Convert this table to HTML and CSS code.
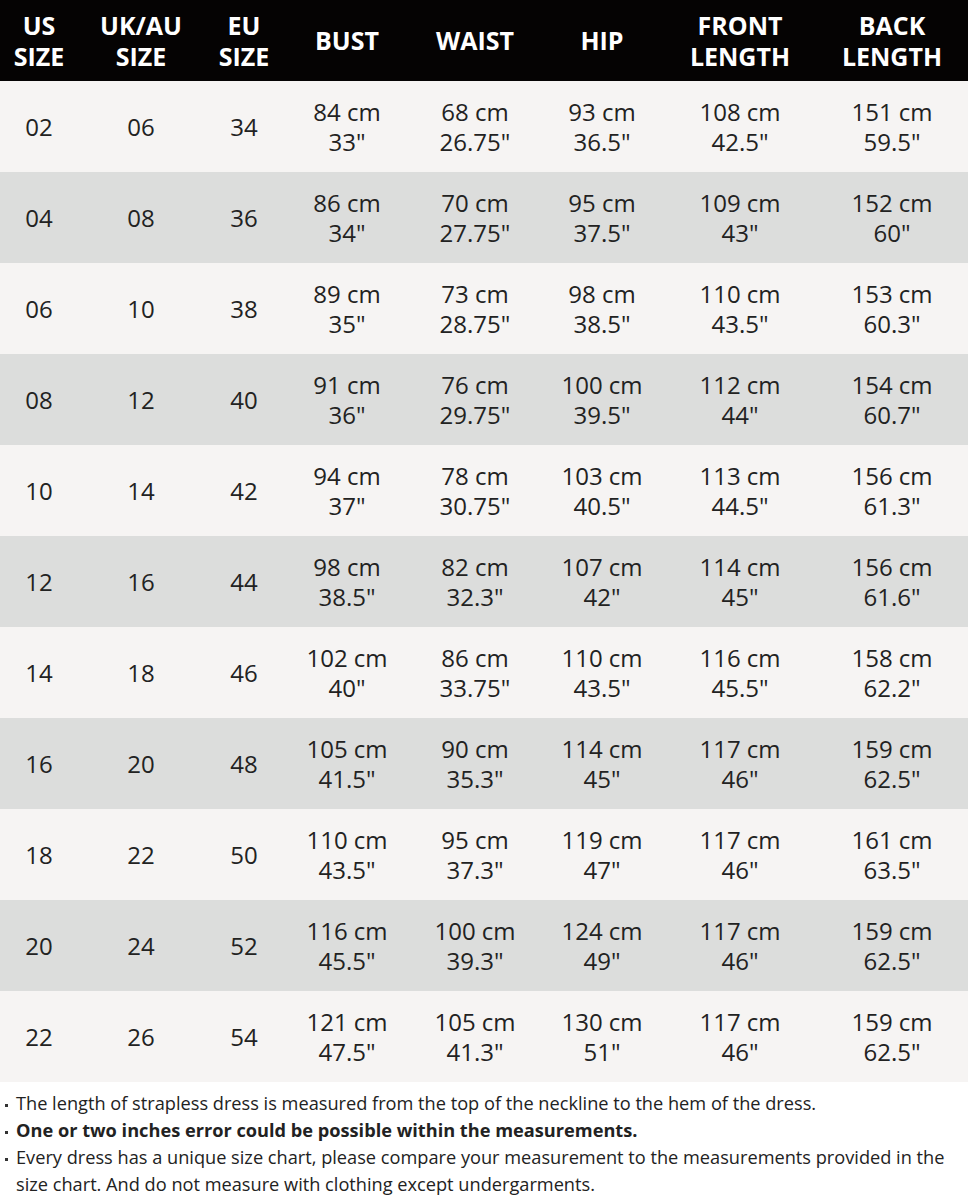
FILE: index.html
```html
<!DOCTYPE html>
<html>
<head>
<meta charset="utf-8">
<link rel="stylesheet" href="styles.css">
</head>
<body>
<div class="chart">
  <div class="row head">
    <div class="cell">US<br>SIZE</div>
    <div class="cell">UK/AU<br>SIZE</div>
    <div class="cell">EU<br>SIZE</div>
    <div class="cell">BUST</div>
    <div class="cell">WAIST</div>
    <div class="cell">HIP</div>
    <div class="cell">FRONT<br>LENGTH</div>
    <div class="cell">BACK<br>LENGTH</div>
  </div>
  <div class="row light">
    <div class="cell">02</div><div class="cell">06</div><div class="cell">34</div>
    <div class="cell">84 cm<br>33"</div><div class="cell">68 cm<br>26.75"</div><div class="cell">93 cm<br>36.5"</div>
    <div class="cell">108 cm<br>42.5"</div><div class="cell">151 cm<br>59.5"</div>
  </div>
  <div class="row gray">
    <div class="cell">04</div><div class="cell">08</div><div class="cell">36</div>
    <div class="cell">86 cm<br>34"</div><div class="cell">70 cm<br>27.75"</div><div class="cell">95 cm<br>37.5"</div>
    <div class="cell">109 cm<br>43"</div><div class="cell">152 cm<br>60"</div>
  </div>
  <div class="row light">
    <div class="cell">06</div><div class="cell">10</div><div class="cell">38</div>
    <div class="cell">89 cm<br>35"</div><div class="cell">73 cm<br>28.75"</div><div class="cell">98 cm<br>38.5"</div>
    <div class="cell">110 cm<br>43.5"</div><div class="cell">153 cm<br>60.3"</div>
  </div>
  <div class="row gray">
    <div class="cell">08</div><div class="cell">12</div><div class="cell">40</div>
    <div class="cell">91 cm<br>36"</div><div class="cell">76 cm<br>29.75"</div><div class="cell">100 cm<br>39.5"</div>
    <div class="cell">112 cm<br>44"</div><div class="cell">154 cm<br>60.7"</div>
  </div>
  <div class="row light">
    <div class="cell">10</div><div class="cell">14</div><div class="cell">42</div>
    <div class="cell">94 cm<br>37"</div><div class="cell">78 cm<br>30.75"</div><div class="cell">103 cm<br>40.5"</div>
    <div class="cell">113 cm<br>44.5"</div><div class="cell">156 cm<br>61.3"</div>
  </div>
  <div class="row gray">
    <div class="cell">12</div><div class="cell">16</div><div class="cell">44</div>
    <div class="cell">98 cm<br>38.5"</div><div class="cell">82 cm<br>32.3"</div><div class="cell">107 cm<br>42"</div>
    <div class="cell">114 cm<br>45"</div><div class="cell">156 cm<br>61.6"</div>
  </div>
  <div class="row light">
    <div class="cell">14</div><div class="cell">18</div><div class="cell">46</div>
    <div class="cell">102 cm<br>40"</div><div class="cell">86 cm<br>33.75"</div><div class="cell">110 cm<br>43.5"</div>
    <div class="cell">116 cm<br>45.5"</div><div class="cell">158 cm<br>62.2"</div>
  </div>
  <div class="row gray">
    <div class="cell">16</div><div class="cell">20</div><div class="cell">48</div>
    <div class="cell">105 cm<br>41.5"</div><div class="cell">90 cm<br>35.3"</div><div class="cell">114 cm<br>45"</div>
    <div class="cell">117 cm<br>46"</div><div class="cell">159 cm<br>62.5"</div>
  </div>
  <div class="row light">
    <div class="cell">18</div><div class="cell">22</div><div class="cell">50</div>
    <div class="cell">110 cm<br>43.5"</div><div class="cell">95 cm<br>37.3"</div><div class="cell">119 cm<br>47"</div>
    <div class="cell">117 cm<br>46"</div><div class="cell">161 cm<br>63.5"</div>
  </div>
  <div class="row gray">
    <div class="cell">20</div><div class="cell">24</div><div class="cell">52</div>
    <div class="cell">116 cm<br>45.5"</div><div class="cell">100 cm<br>39.3"</div><div class="cell">124 cm<br>49"</div>
    <div class="cell">117 cm<br>46"</div><div class="cell">159 cm<br>62.5"</div>
  </div>
  <div class="row light">
    <div class="cell">22</div><div class="cell">26</div><div class="cell">54</div>
    <div class="cell">121 cm<br>47.5"</div><div class="cell">105 cm<br>41.3"</div><div class="cell">130 cm<br>51"</div>
    <div class="cell">117 cm<br>46"</div><div class="cell">159 cm<br>62.5"</div>
  </div>
</div>
<ul class="notes">
  <li>The length of strapless dress is measured from the top of the neckline to the hem of the dress.</li>
  <li class="bold">One or two inches error could be possible within the measurements.</li>
  <li>Every dress has a unique size chart, please compare your measurement to the measurements provided in the size chart. And do not measure with clothing except undergarments.</li>
</ul>
</body>
</html>
```

FILE: styles.css
```css
html, body {
  margin: 0;
  padding: 0;
  background: #ffffff;
}
body {
  width: 968px;
  font-family: "Open Sans", "Noto Sans", "DejaVu Sans", sans-serif;
  color: #222222;
}
.chart {
  display: flex;
  flex-direction: column;
}
.row {
  display: grid;
  grid-template-columns: 78px 126px 80px 126px 130px 124px 152px 152px;
  height: 91px;
  align-items: center;
  text-align: center;
}
.head {
  height: 81px;
  background: #050303;
  color: #ffffff;
  font-weight: 700;
}
.light {
  background: #f6f4f3;
}
.gray {
  background: #dcdddc;
}
.row .cell {
  font-size: 24px;
  line-height: 30px;
}
.head .cell {
  font-size: 25px;
  line-height: 31px;
}
.notes {
  list-style: none;
  margin: 0;
  padding: 8px 16px 0 16px;
  font-size: 18.2px;
  line-height: 27px;
  color: #222222;
}
.notes li {
  position: relative;
}
.notes li::before {
  content: "";
  position: absolute;
  left: -11px;
  top: 14px;
  width: 3px;
  height: 3px;
  background: #333333;
}
.notes .bold {
  font-weight: 700;
}
```
